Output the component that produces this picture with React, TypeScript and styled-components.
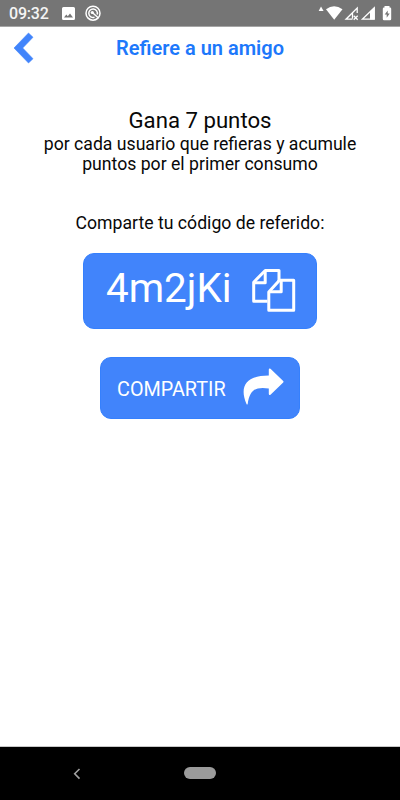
import React from "react";
import styled, { createGlobalStyle } from "styled-components";

const GlobalStyle = createGlobalStyle`
  * { box-sizing: border-box; }
  body { margin: 0; background: #fff; font-family: Roboto, sans-serif; }
  svg { display: block; flex: none; }
`;

const Screen = styled.div`
  width: 400px;
  height: 800px;
  display: flex;
  flex-direction: column;
  background: #fff;
  overflow: hidden;
`;

const StatusBar = styled.header`
  height: 27px;
  flex: none;
  display: flex;
  align-items: flex-start;
  justify-content: space-between;
  background: #757575;
  border-bottom: 1px solid #a5a5a5;
`;

const StatusGroup = styled.div`
  display: flex;
  height: 26px;
`;

const Clock = styled.time`
  width: 61px;
  padding-left: 9px;
  font-size: 16px;
  line-height: 28px;
  font-weight: 500;
  letter-spacing: -0.2px;
  color: #f4f4f4;
`;

const TitleBar = styled.nav`
  height: 43px;
  flex: none;
  display: grid;
  grid-template-columns: 50px 1fr 50px;
`;

const BackButton = styled.button`
  border: 0;
  padding: 0;
  background: none;
`;

const Title = styled.h1`
  margin: 0;
  text-align: center;
  font-size: 20px;
  line-height: 42px;
  font-weight: 600;
  color: #1d78fb;
  white-space: nowrap;
`;

const Content = styled.main`
  flex: 1;
  display: flex;
  flex-direction: column;
  align-items: center;
  padding-top: 36px;
  color: #080808;
`;

const Headline = styled.h2`
  margin: 0;
  font-size: 22.2px;
  line-height: 28px;
  font-weight: 400;
  white-space: nowrap;
`;

const Copy = styled.p<{ $gap?: number }>`
  margin: ${(p) => p.$gap ?? 0}px 0 0;
  font-size: 17.65px;
  line-height: 20px;
  text-align: center;
  white-space: nowrap;
`;

const ActionButton = styled.button<{ $w: number; $h: number; $top: number }>`
  width: ${(p) => p.$w}px;
  height: ${(p) => p.$h}px;
  margin-top: ${(p) => p.$top}px;
  display: flex;
  align-items: flex-start;
  border: 1px solid #3580fd;
  border-radius: 11px;
  padding: 0;
  background: #4184fb;
  color: #fff;
  font-family: inherit;
`;

const CodeLabel = styled.span`
  width: 167px;
  padding-left: 22px;
  text-align: left;
  font-size: 40.4px;
  line-height: 70px;
`;

const ShareLabel = styled.span`
  width: 140px;
  padding-left: 16px;
  text-align: left;
  font-size: 19.8px;
  line-height: 63px;
  white-space: nowrap;
`;

const NavBar = styled.footer`
  height: 54px;
  flex: none;
  display: flex;
  align-items: center;
  padding-left: 72px;
  border-top: 1px solid #c8c8c8;
  background: #000;
`;

const HomePill = styled.div`
  width: 32px;
  height: 12px;
  margin-left: 102px;
  margin-bottom: 1px;
  border-radius: 6px;
  background: #9b9b9b;
`;

const NotificationIcons = () => (
  <svg width="44" height="26" viewBox="61 0 44 26">
    <path fillRule="evenodd" fill="#fff" d="M63.5 7h10q1.5 0 1.500 1.500v10q0 1.500-1.500 1.500h-10q-1.500 0-1.500-1.500v-10q0-1.500 1.500-1.500zM64 17.500h9l-3-4-2.200 2.800-1.500-1.800z" />
    <circle cx="93" cy="13.200" r="7" fill="none" stroke="#fff" strokeWidth="1.500" />
    <path d="M94.500 17.300A4.300 4.300 0 1 1 97.200 14.500M92 12.200l6.500 5.800" fill="none" stroke="#fff" strokeWidth="1.500" />
    <circle cx="92.300" cy="12.500" r="1.600" fill="#fff" />
  </svg>
);

const SignalIcons = () => (
  <svg width="84" height="26" viewBox="316 0 84 26">
    <path d="M318.700 11l2.300-4.500 2.600 4.500z" fill="#fff" />
    <path d="M326 9.300Q334 3.200 342.500 9.300L334.200 19.700z" fill="#fff" />
    <path d="M357.200 13V8L346 19.200h6.500M352.500 12.500v6" fill="none" stroke="#fff" strokeWidth="1.300" />
    <path d="M353.700 15.700l4 4m0-4l-4 4" stroke="#fff" strokeWidth="1.300" />
    <path d="M374.300 7.700V19.200H362.300z" fill="none" stroke="#fff" strokeWidth="1.200" />
    <path d="M370 11.200l4.500-4v12.300H370z" fill="#fff" />
    <path d="M384.500 7.500V6h5v1.500h.5q1.200 0 1.200 1.200v10.300q0 1.200-1.200 1.200h-6q-1.200 0-1.200-1.200V8.700q0-1.200 1.200-1.200z" fill="#fff" />
    <path d="M387.700 10.500l-3 4h2v3.300l3-4.300h-2z" fill="#757575" />
  </svg>
);

const BackIcon = () => (
  <svg width="50" height="43" viewBox="0 27 50 43">
    <path d="M28.500 33l4.500 4.300-10.300 10.700L33 58.700 28.500 63 14 48z" fill="#4184fb" stroke="#4184fb" strokeWidth=".6" strokeLinejoin="round" />
  </svg>
);

const CopyIcon = () => (
  <svg width="46" height="46" viewBox="251 268 46 46">
    <g fill="none" stroke="#fff" strokeWidth="3" strokeLinejoin="round">
      <path d="M267.500 301.300H253.700V282.300L265.200 270.500H279V281" />
      <path d="M265.200 271V282.700H254" />
      <path d="M268.800 292L279.500 280.200H293.700V310.300H268.800z" />
      <path d="M281.200 280.500V291.800H269" />
    </g>
  </svg>
);

const IconSlot = styled.span<{ $top: number }>`
  padding-top: ${(p) => p.$top}px;
`;

const ShareIcon = () => (
  <svg width="44" height="40" viewBox="241 367 44 40">
    <path d="M270.500 368.700L283.200 381q.6.700 0 1.400L270.500 394.700q-1.500 1-1.700-.7V388.400C256 386.500 249.800 389.500 247.700 404q-.5 1-1.200 0C238.500 385.500 247.500 375.500 268.800 375.400V369.500q.2-1.700 1.700-.8z" fill="#fff" />
  </svg>
);

const NavBackIcon = () => (
  <svg width="10" height="14" viewBox="72 766 10 14">
    <path d="M79.500 768L74.700 772.800 79.500 777.600" fill="none" stroke="#a0a0a0" strokeWidth="1.600" />
  </svg>
);

export default function App() {
  return (
    <>
      <GlobalStyle />
      <Screen>
        <StatusBar>
          <StatusGroup>
            <Clock>09:32</Clock>
            <NotificationIcons />
          </StatusGroup>
          <SignalIcons />
        </StatusBar>
        <TitleBar>
          <BackButton aria-label="Volver"><BackIcon /></BackButton>
          <Title>Refiere a un amigo</Title>
        </TitleBar>
        <Content>
          <Headline>Gana 7 puntos</Headline>
          <Copy>
            por cada usuario que refieras y acumule<br />puntos por el primer consumo
          </Copy>
          <Copy $gap={39}>Comparte tu código de referido:</Copy>
          <ActionButton $w={234} $h={76} $top={20}>
            <CodeLabel>4m2jKi</CodeLabel>
            <IconSlot $top={14}><CopyIcon /></IconSlot>
          </ActionButton>
          <ActionButton $w={200} $h={62} $top={28}>
            <ShareLabel>COMPARTIR</ShareLabel>
            <IconSlot $top={9}><ShareIcon /></IconSlot>
          </ActionButton>
        </Content>
        <NavBar>
          <NavBackIcon />
          <HomePill />
        </NavBar>
      </Screen>
    </>
  );
}
